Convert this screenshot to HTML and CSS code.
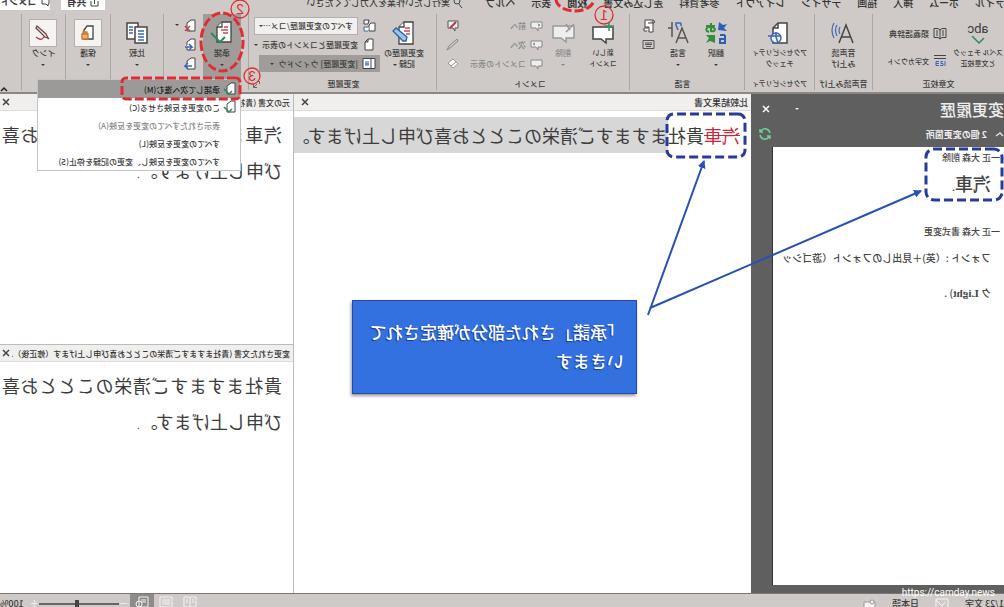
FILE: index.html
```html
<!DOCTYPE html>
<html lang="ja">
<head>
<meta charset="utf-8">
<title>変更履歴</title>
<meta name="viewport" content="width=device-width, initial-scale=1">
<link rel="stylesheet" href="styles.css">
</head>
<body>
<div class="window">
  <nav class="tabs">
    <div class="tab-list">
      <a class="tab" href="#">ファイル</a>
      <a class="tab" href="#">ホーム</a>
      <a class="tab" href="#">挿入</a>
      <a class="tab" href="#">描画</a>
      <a class="tab" href="#">デザイン</a>
      <a class="tab" href="#">レイアウト</a>
      <a class="tab" href="#">参考資料</a>
      <a class="tab" href="#">差し込み文書</a>
      <a class="tab tab-active" href="#">校閲</a>
      <a class="tab" href="#">表示</a>
      <a class="tab" href="#">ヘルプ</a>
    </div>
    <button class="tell-me" type="button">
      <svg width="10" height="12" viewBox="0 0 10 12" fill="none" stroke="#444" stroke-width="1"><circle cx="6" cy="4" r="3"/><path d="M4 7 1 11"/></svg>
      実行したい作業を入力してください
    </button>
    <div class="tab-actions">
      <button class="chip" type="button"><svg width="9" height="9" viewBox="0 0 9 9" fill="none" stroke="#444"><path d="M1 3v5h7V3M4.500 6V1M3 2l1.500-1.500L6 2"/></svg>共有</button>
      <button class="chip chip-wide" type="button"><svg width="9" height="9" viewBox="0 0 9 9" fill="none" stroke="#444"><path d="M1 1h7v5H4L2 8V6H1z"/></svg>コメント</button>
    </div>
  </nav>

  <div class="ribbon">
    <section class="group g-proof">
      <div class="group-body">
        <button class="big" type="button">
          <span class="pic abc">abc<svg width="14" height="9" viewBox="0 0 14 9" fill="none" stroke="#2d8a5b" stroke-width="1.500"><path d="M1 2l5 5 7-7"/></svg></span>
          <span class="cap kana">スペル チェック<br>と文章校正</span>
        </button>
        <div class="stack two">
          <button class="row" type="button"><svg width="14" height="13" viewBox="0 0 14 13" fill="none" stroke="#444"><path d="M7 2v10M1 1.500h4L7 3l2-1.500h4v9H9L7 12l-2-1.500H1zM3 4h2M3 6h2M3 8h2M9 4h2M9 6h2M9 8h2"/></svg>類義語辞典</button>
          <button class="row" type="button"><svg width="14" height="13" viewBox="0 0 14 13" fill="none" stroke="#444"><path d="M1 1.500h12M1 4.500h12"/><path stroke="#3c66b8" d="M2 7v5M4 7.500h2v2H4v2h3M8 7.500h3v4H8M8 9.500h3"/></svg><span class="kana">文字カウント</span></button>
        </div>
      </div>
      <h2>文章校正</h2>
    </section>

    <section class="group g-read">
      <div class="group-body">
        <button class="big" type="button">
          <span class="pic"><svg width="24" height="24" viewBox="0 0 24 24" fill="none" stroke="#444" stroke-width="1.500"><path d="M2 22 9 4l7 18M4.500 16h9"/><g stroke="#3c66b8" stroke-width="1.200"><path d="M15 6q2 3 0 7M18 4q3 5 0 11M21 2q4 7 0 15"/></g></svg></span>
          <span class="cap">音声読<br>み上げ</span>
        </button>
      </div>
      <h2>音声読み上げ</h2>
    </section>

    <section class="group g-access">
      <div class="group-body">
        <button class="big" type="button">
          <span class="pic"><svg width="24" height="24" viewBox="0 0 24 24" fill="none" stroke="#444" stroke-width="1.500"><path fill="#fff" d="M4 22V2h9l5 5v15z"/><path d="M13 2v5h5"/><circle cx="15" cy="17" r="5" fill="#eee" stroke="#3c66b8"/><path stroke="#3c66b8" d="M10 15h13M15 11v5l-2 6"/></svg></span>
          <span class="cap kana">アクセシビリティ<br>チェック</span>
        </button>
      </div>
      <h2 class="kana">アクセシビリティ</h2>
    </section>

    <section class="group g-lang">
      <div class="group-body">
        <button class="big" type="button">
          <span class="pic"><svg width="24" height="24" viewBox="0 0 24 24"><path fill="none" stroke="#2f8f3a" stroke-width="2" d="M13 5h9M17 2v8q-4 1-4-2 2-3 7-2 4 3-1 5"/><path fill="none" stroke="#2d5fb5" stroke-width="2" d="M3 14v8h5v-4H3M3 14h5"/><path fill="#2d5fb5" d="M1 3l4 1 4-3 1 8-9 1 3-3z"/><path fill="#2f8f3a" d="M13 14h9l-3 3 3 5-4-2-5 2z"/></svg></span>
          <span class="cap">翻訳<br><i class="caret"></i></span>
        </button>
        <button class="big" type="button">
          <span class="pic"><svg width="24" height="24" viewBox="0 0 24 24" fill="none" stroke="#555" stroke-width="1.500"><path d="M2 22 8 7l6 15M4 17h8M18 1v15M18 7h4"/><path stroke="#3c66b8" d="M9 2h5v2l-2 5M9 2v3"/></svg></span>
          <span class="cap">言語<br><i class="caret"></i></span>
        </button>
        <div class="stack tools">
          <button class="tool" type="button" aria-label="漢字変換"><svg width="14" height="14" viewBox="0 0 14 14" fill="#fff" stroke="#444"><path d="M3 1h8v7H7v5H3zM3 1Q0 2 2 4h6"/><path d="M7 9h5v3H9"/></svg></button>
          <button class="tool" type="button" aria-label="入力"><svg width="13" height="11" viewBox="0 0 13 11" fill="none" stroke="#555"><path d="M1 1.500h11v8H1zM3 4h7M3 5.500h7M4 7.500h5"/></svg></button>
        </div>
      </div>
      <h2>言語</h2>
    </section>

    <section class="group g-comment">
      <div class="group-body">
        <button class="big" type="button">
          <span class="pic"><svg width="24" height="24" viewBox="0 0 24 24" fill="#fff" stroke="#444" stroke-width="1.500"><path d="M2 6h20v12h-8l-5 4v-4H2z"/><path stroke="#2d9a60" d="M6 1v9M1 5h10"/></svg></span>
          <span class="cap kana">新しい<br>コメント</span>
        </button>
        <button class="big muted" type="button">
          <span class="pic"><svg width="24" height="24" viewBox="0 0 24 24" fill="#eee" stroke="#999" stroke-width="1.500"><path d="M1 5h21v12h-8l-5 4v-4H1z"/><path d="M1 3l8 8M9 3l-4 6"/></svg></span>
          <span class="cap">削除<br><i class="caret"></i></span>
        </button>
        <div class="stack">
          <button class="row muted" type="button"><svg width="13" height="12" viewBox="0 0 13 12" fill="#eee" stroke="#888"><path d="M1 2h11v6H7l-2 3V8H1zM5 4L3 5l2 1"/></svg>前へ</button>
          <button class="row muted" type="button"><svg width="13" height="12" viewBox="0 0 13 12" fill="#eee" stroke="#888"><path d="M1 2h11v6H7l-2 3V8H1zM8 4l2 1-2 1"/></svg>次へ</button>
          <button class="row muted" type="button"><svg width="13" height="12" viewBox="0 0 13 12" fill="#eee" stroke="#888"><path d="M1 2h11v6H7l-2 3V8H1z"/></svg>コメントの表示</button>
        </div>
        <div class="stack ink-tools">
          <button class="tool" type="button" aria-label="インクコメント"><svg width="14" height="13" viewBox="0 0 14 13" fill="#eee" stroke="#555"><path d="M2 2h10v7H7l-2 3V9H2z"/><path stroke="#b8344c" stroke-width="2" d="M4 3l6 6"/></svg></button>
          <button class="tool" type="button" aria-label="ペン"><svg width="14" height="13" viewBox="0 0 14 13" fill="none" stroke="#888"><path d="M13 12l-2-4-8-7-1 2 8 7z"/></svg></button>
          <button class="tool" type="button" aria-label="消しゴム"><svg width="14" height="13" viewBox="0 0 14 13" fill="#fff" stroke="#999"><path d="M2 7l5-5 5 4-5 5zM4 5l5 4"/></svg></button>
        </div>
      </div>
      <h2>コメント</h2>
    </section>

    <section class="group g-track">
      <div class="group-body">
        <button class="big" type="button">
          <span class="pic"><svg width="24" height="24" viewBox="0 0 24 24" fill="#fff" stroke="#444" stroke-width="1.300"><path d="M3 23V1h9l5 5v17z"/><path d="M12 1v5h5"/><path stroke="#cf4660" d="M6 7h5M6 10h6M6 13h4"/><path fill="#9dc4ee" stroke="#2d5f9f" d="M10 20l-1-4L20 7l3 3-10 10z"/></svg></span>
          <span class="cap">変更履歴の<br>記録 <i class="caret"></i></span>
        </button>
        <div class="stack track-rows">
          <div class="row">
            <svg width="14" height="13" viewBox="0 0 14 13" fill="#fff" stroke="#444"><path d="M1 4h4l2 2v6H1zM7 1h5v4H8z"/><path stroke="#3c66b8" d="M7 8h5v4H8"/></svg>
            <label class="combo"><select aria-label="変更内容の表示"><option>すべての変更履歴/コメ…</option></select><i class="caret"></i></label>
          </div>
          <button class="row" type="button"><svg width="14" height="13" viewBox="0 0 14 13" fill="#fff" stroke="#444"><path d="M3 12V1h5l3 3v8zM8 1v3h3"/></svg>変更履歴とコメントの表示 <i class="caret"></i></button>
          <button class="row pressed" type="button"><svg width="14" height="13" viewBox="0 0 14 13" fill="#fff" stroke="#444"><path d="M1 1.500h12v10H1zM5 2v9"/><path stroke="#3c66b8" d="M8 4v5M10 4v5M7 7h4"/></svg>[変更履歴] ウィンドウ <i class="caret"></i></button>
        </div>
      </div>
      <h2>変更履歴</h2>
      <button class="launcher" type="button" aria-label="変更履歴オプション"><svg width="7" height="7" viewBox="0 0 7 7" fill="none" stroke="#666"><path d="M.5 3V.5H3M3 3l3 3M6.500 3v3.500H3"/></svg></button>
    </section>

    <section class="group g-changes">
      <div class="group-body">
        <button class="big pressed" type="button">
          <span class="pic"><svg width="26" height="26" viewBox="0 0 26 26" fill="#fff" stroke="#444" stroke-width="1.300"><path d="M4 22V2h9l5 5v15z"/><path d="M13 2v5h5"/><path stroke="#cf4660" d="M7 7h4M7 10h7M7 13h5"/><path stroke="#2d8a5b" stroke-width="2" fill="none" d="M10 17l5 5 9-9"/></svg></span>
          <span class="cap">承諾<br><i class="caret"></i></span>
        </button>
        <div class="stack tools">
          <button class="tool" type="button" aria-label="元に戻す"><svg width="13" height="14" viewBox="0 0 13 14" fill="#fff" stroke="#444"><path d="M2 12V1h4l4 3v8z"/><path stroke="#d03a55" stroke-width="1.500" d="M7 7l5 5M12 7l-5 5"/></svg></button>
          <button class="tool" type="button" aria-label="前の変更"><svg width="13" height="14" viewBox="0 0 13 14" fill="#fff" stroke="#444"><path d="M2 12V1h4l4 3v8z"/><path stroke="#3c66b8" stroke-width="1.500" d="M12 9H5l3-3M5 9l3 3"/></svg></button>
          <button class="tool" type="button" aria-label="次の変更"><svg width="13" height="14" viewBox="0 0 13 14" fill="#fff" stroke="#444"><path d="M2 12V1h4l4 3v8z"/><path stroke="#3c66b8" stroke-width="1.500" d="M5 9h7L9 6M12 9l-3 3"/></svg></button>
        </div>
        <i class="caret reject-caret"></i>
      </div>
    </section>

    <section class="group g-compare">
      <div class="group-body">
        <button class="big" type="button">
          <span class="pic"><svg width="24" height="24" viewBox="0 0 24 24" fill="#fff" stroke="#444" stroke-width="1.500"><path d="M11 2h11v16H11z"/><path stroke="#3c66b8" d="M16 6h4M16 9h4M16 12h4"/><path d="M2 6h12v16H2z"/><path stroke="#3c66b8" d="M5 10h6M5 13h6M5 16h6M5 19h6"/></svg></span>
          <span class="cap">比較<br><i class="caret"></i></span>
        </button>
      </div>
    </section>
    <section class="group g-protect">
      <div class="group-body">
        <button class="big" type="button">
          <span class="pic framed"><svg width="18" height="18" viewBox="0 0 18 18" fill="#fff" stroke="#444" stroke-width="1.300"><path d="M4 15V2h6l3 4v9z"/><path fill="#f0b060" stroke="#c9782a" d="M9 10h6v5H9zM10 10V8h4v2"/></svg></span>
          <span class="cap">保護<br><i class="caret"></i></span>
        </button>
      </div>
    </section>
    <section class="group g-ink">
      <div class="group-body">
        <button class="big" type="button">
          <span class="pic framed"><svg width="18" height="18" viewBox="0 0 18 18" fill="none" stroke="#b8344c" stroke-width="1.300"><path d="M3 15q4-4 6-1t7-1"/><path fill="#eee" stroke="#744" d="M4 14l2-4 9-8 1 2-9 9z"/></svg></span>
          <span class="cap">インク<br><i class="caret"></i></span>
        </button>
      </div>
    </section>
    <button class="collapse" type="button" aria-label="リボンを折りたたむ"><svg width="8" height="6" viewBox="0 0 8 6" fill="none" stroke="#222" stroke-width="1.500"><path d="M1 5l3-3 3 3"/></svg></button>
  </div>

  <main class="workspace">
    <aside class="revisions">
      <header class="rev-title">
        <h1>変更履歴</h1>
        <i class="caret"></i>
        <button class="tool" type="button" aria-label="閉じる"><svg width="8" height="8" viewBox="0 0 8 8" stroke="#fff" stroke-width="1.500"><path d="M1 1l6 6M7 1L1 7"/></svg></button>
      </header>
      <div class="rev-sum">
        <svg width="9" height="6" viewBox="0 0 9 6" fill="none" stroke="#ddd" stroke-width="1.500"><path d="M1 5l3-3 4 3"/></svg>
        <strong>2 個の変更箇所</strong>
        <button class="tool" type="button" aria-label="更新"><svg width="14" height="14" viewBox="0 0 14 14" fill="none" stroke="#6fcf97" stroke-width="1.500"><path d="M2 6a5 5 0 0 1 9-2l1 1M12 2v3H9M12 8a5 5 0 0 1-9 2L2 9M2 12V9h3"/></svg></button>
      </div>
      <div class="rev-list">
        <p class="who">一正 大森 削除</p>
        <p class="deleted">汽車<small>.</small></p>
        <p class="who">一正 大森 書式変更</p>
        <p class="detail">フォント :（英)＋見出しのフォント（游ゴシッ<br>ク <b>Light</b>) .</p>
      </div>
    </aside>

    <section class="result">
      <header class="doc-head"><span>比較結果文書</span><button class="tool" type="button" aria-label="閉じる"><svg width="8" height="8" viewBox="0 0 8 8" stroke="#444" stroke-width="1.500"><path d="M1 1l6 6M7 1L1 7"/></svg></button></header>
      <p class="merged"><del>汽車</del>貴社<span class="after">ますますご清栄のこととお喜び申し上げます。</span></p>
    </section>

    <div class="sources">
      <section class="source">
        <header class="doc-head"><span>元の文書 (貴社ますますご清栄のこととお喜び申し上げます（大森)</span><button class="tool" type="button" aria-label="閉じる"><svg width="8" height="8" viewBox="0 0 8 8" stroke="#444" stroke-width="1.500"><path d="M1 1l6 6M7 1L1 7"/></svg></button></header>
        <p class="body-text">汽車ますますご清栄のこととお喜び申し上げます。<small>.</small></p>
      </section>
      <section class="source">
        <header class="doc-head"><span>変更された文書 (貴社ますますご清栄のこととお喜び申し上げます（修正後）.d</span><button class="tool" type="button" aria-label="閉じる"><svg width="8" height="8" viewBox="0 0 8 8" stroke="#444" stroke-width="1.500"><path d="M1 1l6 6M7 1L1 7"/></svg></button></header>
        <p class="body-text">貴社ますますご清栄のこととお喜び申し上げます。<small>.</small></p>
      </section>
    </div>
  </main>

  <footer class="status">
    <span>1/23 文字</span>
    <svg width="14" height="12" viewBox="0 0 14 12" fill="none" stroke="#f4f4f4"><path d="M1 1h12v10H1zM4 4l3 4 6-6"/></svg>
    <span>日本語</span>
    <svg width="13" height="10" viewBox="0 0 13 10" fill="#f4f4f4" stroke="#999"><path d="M1 3h11v6H1z"/><circle cx="4" cy="3" r="2"/></svg>
    <div class="views">
      <button type="button" aria-label="閲覧モード"><svg width="14" height="11" viewBox="0 0 14 11" fill="none" stroke="#f4f4f4"><path d="M1 1h5l1 1 1-1h5v10H1zM7 2v9M3 4h2M3 6h2M9 4h2M9 6h2"/></svg></button>
      <button type="button" aria-label="印刷レイアウト"><svg width="14" height="11" viewBox="0 0 14 11" fill="none" stroke="#f4f4f4"><path d="M1 1h12v10H1zM3 4h8M3 6h8M3 8h8"/></svg></button>
      <button class="on" type="button" aria-label="Web レイアウト"><svg width="14" height="11" viewBox="0 0 14 11" fill="none" stroke="#f4f4f4"><path d="M1 1h9v10H1zM3 4h5M3 6h5"/><circle cx="10" cy="8" r="3"/></svg></button>
    </div>
    <label class="zoom">－<input type="range" min="0" max="100" value="52" aria-label="ズーム">＋</label>
    <span>100%</span>
  </footer>

  <div class="menu" role="menu">
    <button class="hot" type="button" role="menuitem"><svg width="14" height="14" viewBox="0 0 14 14" fill="#fff" stroke="#444"><path d="M2 12V1h4l4 3v8z"/><path stroke="#2d8a5b" stroke-width="1.500" fill="none" d="M5 9l3 3 5-5"/></svg>承諾して次へ進む(M)</button>
    <button type="button" role="menuitem"><svg width="14" height="14" viewBox="0 0 14 14" fill="#fff" stroke="#444"><path d="M2 12V1h4l4 3v8z"/><path stroke="#2d8a5b" stroke-width="1.500" fill="none" d="M5 9l3 3 5-5"/></svg>この変更を反映させる(C)</button>
    <button class="muted" type="button" role="menuitem">表示されたすべての変更を反映(A)</button>
    <button type="button" role="menuitem">すべての変更を反映(L)</button>
    <button type="button" role="menuitem">すべての変更を反映し、変更の記録を停止(S)</button>
  </div>

  <svg class="marks" width="1004" height="607" viewBox="0 0 1004 607" fill="none">
    <defs><marker id="tip" viewBox="0 0 8 8" refX="7" refY="4" markerWidth="8" markerHeight="8" markerUnits="userSpaceOnUse" orient="auto"><path d="M0 0l8 4-8 4z" fill="#2850b4"/></marker></defs>
    <g stroke="#e02c30" stroke-width="3" stroke-dasharray="9 3">
      <ellipse cx="429" cy="-1" rx="19" ry="12"/>
      <ellipse cx="782" cy="42" rx="21" ry="29"/>
      <rect x="764" y="78" width="118" height="21" rx="4"/>
    </g>
    <g stroke="#e02c30" stroke-width="1.300"><circle cx="400" cy="15" r="9"/><circle cx="764" cy="9" r="9"/><circle cx="752" cy="76" r="8"/></g>
    <g class="num"><text x="400" y="20">1</text><text x="764" y="14">2</text><text x="752" y="81">3</text></g>
    <g stroke="#263c9c" stroke-width="3" stroke-dasharray="9 4">
      <rect x="259" y="114" width="78" height="43" rx="7"/>
      <rect x="2" y="149" width="76" height="51" rx="8"/>
    </g>
    <g stroke="#2850b4" stroke-width="2">
      <path d="M356 315 300 161" marker-end="url(#tip)"/><path d="M354 308 83 191" marker-end="url(#tip)"/>
    </g>
  </svg>
  <div class="callout">「承諾」された部分が確定されていきます</div>
</div>
<div class="credit">https://camday.news</div>
</body>
</html>
```
FILE: styles.css
```css
* { box-sizing: border-box; }
body {
  margin: 0;
  overflow: hidden;
  font-family: "Noto Sans CJK JP", "Liberation Sans", sans-serif;
  font-size: 8px;
  font-weight: 500;
  color: #3c3c3c;
}
h1, h2, p { margin: 0; font-weight: 500; }
button {
  margin: 0;
  padding: 0;
  border: 0;
  background: none;
  font: inherit;
  color: inherit;
  white-space: nowrap;
}
svg { flex: none; }
.window {
  position: relative;
  display: flex;
  flex-direction: column;
  min-height: 100vh;
  overflow: hidden;
  background: #cfcac7;
  transform: scaleX(-1);
}
.muted { color: #888; }
.kana { font-size: 7px; }
.caret {
  display: inline-block;
  border: 2px solid transparent;
  border-top-color: currentColor;
  border-bottom: 0;
  vertical-align: middle;
}

/* tab strip */
.tabs {
  display: flex;
  align-items: flex-end;
  height: 10px;
  font-size: 10px;
  line-height: 15px;
}
.tab-list { display: flex; gap: 16px; width: 541px; }
.tab { color: #333; text-decoration: none; white-space: nowrap; }
.tab:first-child { margin-left: -11px; }
.tab-active { font-weight: 700; }
.tell-me {
  display: flex;
  align-items: center;
  gap: 3px;
  font-size: 9px;
  line-height: 15px;
}
.tab-actions { display: flex; gap: 11px; margin-left: auto; }
.chip {
  display: flex;
  align-items: center;
  justify-content: center;
  gap: 4px;
  width: 44px;
  line-height: 16px;
  background: #fff;
  font-weight: 700;
}
.chip-wide { width: 50px; font-size: 9px; }

/* ribbon */
.ribbon {
  display: flex;
  height: 84px;
  padding-top: 2px;
  border-bottom: 2px solid #8b8784;
}
.group {
  position: relative;
  display: flex;
  flex-direction: column;
  flex: none;
  margin: 2px 0;
  border-right: 1px solid #aaa6a3;
}
.group-body { display: flex; height: 66px; }
.group h2 { font-size: 8px; line-height: 13px; text-align: center; white-space: nowrap; }
.group h2.kana { font-size: 7px; }
.big {
  display: flex;
  flex-direction: column;
  align-items: center;
  padding-top: 5px;
  text-align: center;
}
.big .pic { display: flex; align-items: center; justify-content: center; height: 28px; }
.big .cap { line-height: 11px; }
.big .framed { width: 28px; background: #f6f4f2; border: 1px solid #b4afac; }
.big .abc { flex-direction: column; font: 13px/14px Roboto, sans-serif; }
.stack { display: flex; flex-direction: column; padding-top: 2px; }
.row, .tool { display: flex; align-items: center; height: 19px; gap: 4px; }
.tool { justify-content: center; }
.two { padding-top: 6px; }
.two .row { height: 27px; }
.pressed { background: #a09c9a; }

.g-proof { width: 132px; }
.g-proof .big { width: 52px; margin-right: 5px; }
.g-read { width: 58px; }
.g-access { width: 70px; }
.g-read .big, .g-access .big { width: 100%; }
.g-lang { width: 115px; padding-left: 9px; }
.g-lang .big { width: 38px; }
.g-lang .tools { width: 20px; }
.g-comment { width: 193px; padding-left: 6px; }
.g-comment .big { width: 40px; }
.g-comment .stack { width: 80px; }
.g-comment .ink-tools { width: 20px; }
.g-track { width: 188px; padding-left: 8px; }
.g-track .big { width: 48px; }
.g-track h2 { margin-right: 10px; }
.track-rows .row { padding: 0 4px; }
.track-rows .pressed { height: 17px; margin: 1px 9px 0 0; }
.combo {
  display: flex;
  align-items: center;
  width: 104px;
  height: 18px;
  padding: 0 4px;
  background: #f2f0ee;
  border: 1px solid #b4afac;
}
.combo select {
  appearance: none;
  flex: 1;
  min-width: 0;
  padding: 0;
  border: 0;
  background: none;
  font: inherit;
  color: inherit;
}
.launcher { position: absolute; right: 4px; bottom: 0; }
.g-changes { width: 85px; padding-left: 7px; }
.g-changes .big { width: 38px; }
.g-changes .tools { width: 24px; }
.reject-caret { margin-top: 10px; }
.g-compare { width: 53px; }
.g-protect { width: 45px; }
.g-ink { width: 44px; }
.g-compare .big, .g-protect .big, .g-ink .big { width: 100%; }
.collapse { display: flex; align-items: flex-end; margin-left: auto; }

/* panes */
.workspace {
  display: grid;
  grid-template-columns: 253fr 457fr 294fr;
  flex: 1;
  background: #fff;
}
.revisions {
  display: flex;
  flex-direction: column;
  min-width: 0;
  padding: 3px 0 8px;
  background: #5f5f5f;
  color: #eee;
}
.rev-title { display: flex; align-items: center; height: 24px; }
.rev-title h1 { font-size: 16px; line-height: 24px; }
.rev-title .caret { margin-left: auto; }
.rev-title .tool { width: 30px; margin: 0 0 0 14px; }
.rev-sum { display: flex; align-items: center; gap: 8px; height: 26px; font-size: 9px; }
.rev-sum .tool { margin: 0 7px 0 auto; }
.rev-list {
  flex: 1;
  margin-right: 21px;
  padding: 3px 4px;
  background: #fff;
  border-right: 1px solid #333;
  color: #444;
  white-space: nowrap;
}
.who { font-size: 9px; line-height: 16px; }
.deleted { padding: 0 9px 20px; font-size: 18px; line-height: 34px; }
.detail { padding-left: 9px; font-size: 10px; line-height: 35px; }
.detail b { font-family: "Liberation Serif", serif; font-size: 11px; }
.doc-head {
  display: flex;
  align-items: center;
  height: 17px;
  padding-left: 3px;
  background: #f0efee;
  border-bottom: 1px solid #ddd;
  font-size: 8px;
  color: #333;
  white-space: nowrap;
}
.doc-head span { flex: 1; min-width: 0; overflow: hidden; }
.doc-head .tool { width: 12px; height: 16px; }
.result { min-width: 0; }
.result .doc-head { font-size: 9px; padding-right: 5px; }
.merged {
  display: flex;
  margin-top: 6px;
  padding-left: 11px;
  font-size: 18px;
  font-weight: 400;
  line-height: 36px;
  white-space: nowrap;
}
.merged del { color: #c8283c; }
.after { flex: 1; min-width: 0; background: #d7d7d7; }
.sources {
  display: grid;
  grid-template-rows: 250fr 249fr;
  min-width: 0;
  border-left: 1px solid #bbb;
}
.source { min-width: 0; overflow: hidden; }
.source + .source { border-top: 1px solid #bbb; }
.body-text {
  width: 291px;
  padding: 5px 0 0 11px;
  font-size: 18px;
  font-weight: 400;
  line-height: 36px;
  text-align: justify;
}
.body-text small, .deleted small { font-size: 10px; }

/* status bar */
.status {
  display: flex;
  align-items: center;
  gap: 16px;
  height: 14px;
  overflow: hidden;
  border-top: 1px solid #777;
  font-size: 9px;
  line-height: 22px;
  white-space: nowrap;
  padding-top: 6px;
}
.views { display: flex; margin: -5px 0 0 auto; }
.views button { display: flex; align-items: center; justify-content: center; width: 24px; height: 14px; }
.views .on { background: #8e8b89; }
.zoom { display: flex; align-items: center; color: #f4f4f4; margin: 0 -10px 0 -14px; }
.zoom input {
  appearance: none;
  width: 80px;
  height: 2px;
  margin: 0;
  background: #666;
}
.zoom input::-webkit-slider-thumb { appearance: none; width: 4px; height: 8px; background: #444; }

/* drop-down menu and annotations */
.menu {
  position: absolute;
  top: 79px;
  left: 763px;
  display: flex;
  flex-direction: column;
  width: 204px;
  background: #fff;
  border: 1px solid #c4c4c4;
}
.menu button {
  display: flex;
  align-items: center;
  gap: 3px;
  height: 18px;
  padding-left: 20px;
}
.menu button:has(svg) { padding-left: 3px; }
.menu .hot { background: #9c9a99; color: #222; }
.marks { position: absolute; top: 0; left: 0; }
.num { fill: #e02c30; font: 14px "Liberation Sans", sans-serif; text-anchor: middle; }
.callout {
  position: absolute;
  top: 300px;
  left: 367px;
  width: 285px;
  height: 94px;
  padding: 16px 12px;
  background: #3371e0;
  border: 1px solid #2348a8;
  box-shadow: 1px 2px 3px #999;
  color: #fff;
  font-size: 17px;
  font-weight: 500;
  line-height: 29px;
  word-break: break-all;
  text-shadow: 1px 1px 1px #1c3c90;
}
.credit {
  position: absolute;
  right: 9px;
  bottom: 7px;
  font: 10px/14px Roboto, sans-serif;
  color: #fff;
}
```
